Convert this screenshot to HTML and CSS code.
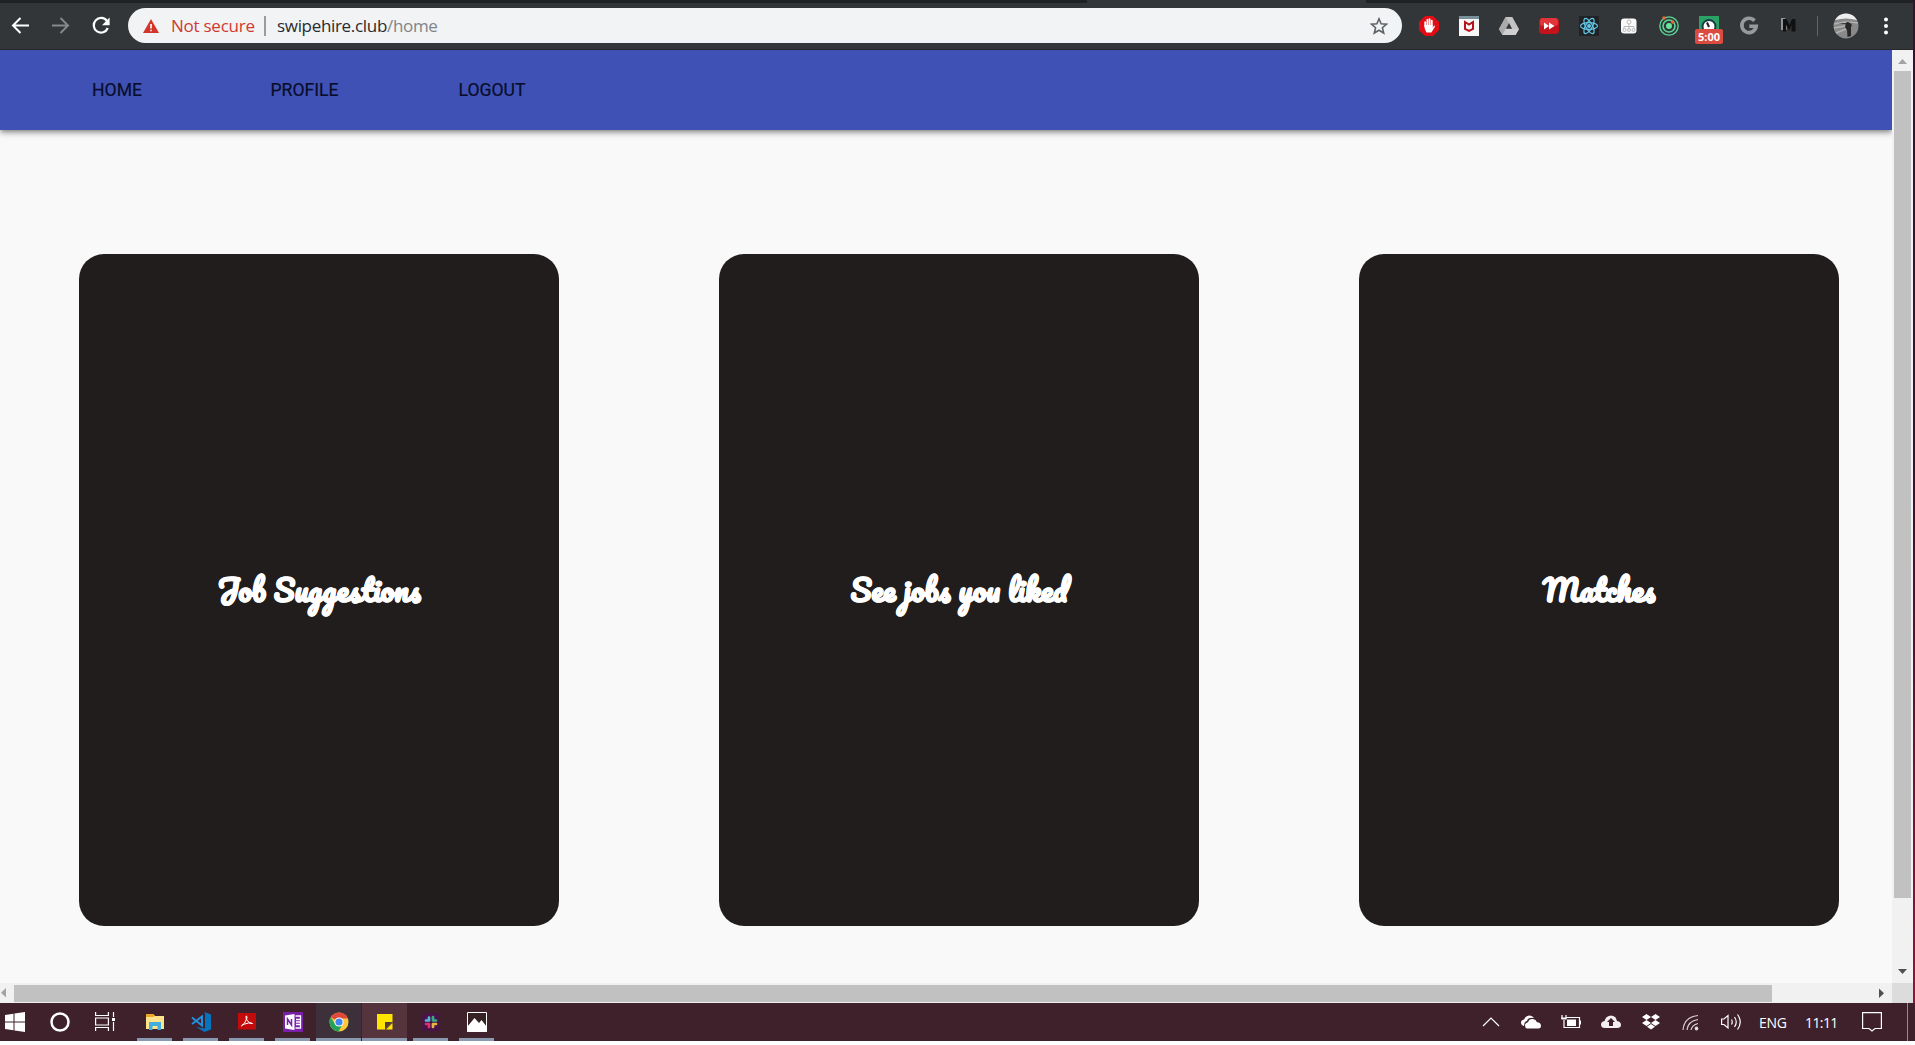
FILE: index.html
```html
<!DOCTYPE html>
<html lang="en">
<head>
<meta charset="utf-8">
<title>SwipeHire</title>
<link rel="stylesheet" href="styles.css">
</head>
<body>
<div class="browser">
  <div class="tabstrip"><i></i></div>
  <header class="toolbar">
    <svg class="nav-icons" width="128" height="47" viewBox="0 3 128 47" fill="none" stroke-width="2">
      <path d="M29 25.500H13M20.500 18L13 25.500L20.500 33" stroke="#fff"/>
      <path d="M52 25.500H68M60.500 18L68 25.500L60.500 33" stroke="#85878a"/>
      <path d="M107 21A7.300 7.300 0 1 0 107.800 28" stroke="#fff" stroke-width="2.200"/><path d="M109.600 17.500V25.200H102z" fill="#fff"/>
    </svg>
    <div class="address">
      <svg class="warn" width="16" height="14" viewBox="0 0 16 14"><path d="M8 0L16 14H0z" fill="#d2362b"/><path d="M8 5V9.500M8 10.700V12.300" stroke="#fff" stroke-width="1.600"/></svg>
      <span class="insecure">Not secure</span><i class="bar"></i><span class="url">swipehire.club<span class="path">/home</span></span>
      <svg class="star" width="18" height="18" viewBox="0 0 18 18"><path d="M9 1.800L11.100 6.700L16.500 7.200L12.400 10.700L13.700 16L9 13.200L4.300 16L5.600 10.700L1.500 7.200L6.900 6.700z" fill="none" stroke="#5f6368" stroke-width="1.600"/></svg>
    </div>
    <div class="extensions">
      <svg viewBox="0 0 20 20"><path d="M6 0H14L20 6V14L14 20H6L0 14V6z" fill="#e30c13"/><path d="M6.200 10V6.200M8.400 9V3.700M10.600 9V3.200M12.800 9.500V4.700" stroke="#fff" stroke-width="1.800" stroke-linecap="round"/><path d="M5.300 9H13.700V11.500L15.200 9.600Q16.500 9.700 15.700 11L12.400 16.500H7.500Q5.300 14 5.300 9z" fill="#fff"/></svg>
      <svg viewBox="0 0 20 20"><path d="M0 0H20V20H0z" fill="#f7f7f7"/><path d="M0 0H20V3H0z" fill="#78909c"/><path d="M6 6L10 8.500L14 6V13L10 15L6 13z" fill="none" stroke="#b5121b" stroke-width="2"/></svg>
      <svg viewBox="0 0 20 20"><path d="M6.700 1H13.300L20 13L16.500 19H3.500L0 13z" fill="#c4c4c4"/><path d="M6.700 1L0 13L3.500 19L10 7z" fill="#aaa"/><path d="M6.700 13H20L16.500 19H3.500z" fill="#d0d0d0"/><path d="M10 7L6.900 12.800H13.100z" fill="#333538"/></svg>
      <svg viewBox="0 0 20 20"><rect y="2" width="20" height="16" rx="4" fill="#c3131c"/><rect x="1" y="2" width="18" height="8" rx="3" fill="#e1353b"/><path d="M5 6.500L10 10L5 13.500zM10 6.500L15.500 10L10 13.500z" fill="#fff"/></svg>
      <svg viewBox="0 0 20 20"><path d="M0 0H20V20H0z" fill="#202225"/><g fill="none" stroke="#61c8e8" stroke-width="1.200"><ellipse cx="10" cy="10" rx="8.500" ry="3.300"/><ellipse cx="10" cy="10" rx="8.500" ry="3.300" transform="rotate(60 10 10)"/><ellipse cx="10" cy="10" rx="8.500" ry="3.300" transform="rotate(120 10 10)"/></g><circle cx="10" cy="10" r="2" fill="#61c8e8"/></svg>
      <svg viewBox="0 0 20 20"><rect x="2" y="2.500" width="15.500" height="15" rx="3" fill="#fafafa"/><g fill="none" stroke="#bbb"><circle cx="10" cy="6" r="2"/><path d="M10 8V13M5 13V10.500H15V13"/><circle cx="5.500" cy="14" r="1.500"/><circle cx="10" cy="14" r="1.500"/><circle cx="14.500" cy="14" r="1.500"/></g></svg>
      <svg viewBox="0 0 20 20"><g fill="none" stroke="#5bd996"><circle cx="10" cy="10" r="9.200" stroke-width="1.300"/><circle cx="10" cy="10" r="6" stroke-width="1.600"/></g><circle cx="10" cy="10" r="3" fill="#67e59a"/><circle cx="5" cy="2" r="1.700" fill="#ee6837"/><circle cx="13.700" cy="6" r="1.700" fill="#ee6837"/></svg>
      <div class="timer"><svg viewBox="0 0 20 20"><path d="M0 0H20V20H0z" fill="#29a263"/><circle cx="10" cy="10.500" r="6.500" fill="#fff" stroke="#173c46" stroke-width="2"/><path d="M10 11L8 6.500" stroke="#222" stroke-width="2"/></svg><b>5:00</b></div>
      <svg viewBox="0 0 20 20"><path d="M15.500 4.700A7.200 7.200 0 1 0 17.200 10.300H10.300" fill="none" stroke="#98999b" stroke-width="3.600"/></svg>
      <svg viewBox="0 0 20 20"><path d="M2 2H6L8 5V14H2z" fill="#929495"/><path d="M4 3H7.500L10.500 9L13 3H16.500V15.500H12.500V9L10.200 14.500L7.200 9V15.500H4z" fill="#111"/></svg>
    </div>
    <i class="separator"></i>
    <svg class="avatar" width="26" height="26" viewBox="0 0 26 26"><circle cx="13" cy="13" r="12.500" fill="#898989"/><path d="M2 7A12.500 12.500 0 0 1 24 7Q13 4 2 7z" fill="#eee"/><path d="M1 11L12 9L25 10M1 15L12 13M3 20L13 16" stroke="#b3b3b3" stroke-width="1.500"/><path d="M13 10Q14 8 17 10L19 12L18 14V23L14.500 24L14 17L12 14z" fill="#292929"/></svg>
    <svg class="menu" width="6" height="18" viewBox="0 0 6 18" fill="#fff"><circle cx="3" cy="2.500" r="2"/><circle cx="3" cy="9" r="2"/><circle cx="3" cy="15.500" r="2"/></svg>
  </header>
  <div class="viewport">
    <div class="page">
      <nav class="navbar"><a class="home">HOME</a><a class="profile">PROFILE</a><a>LOGOUT</a></nav>
      <main class="cards">
        <section class="card"><h2>Job Suggestions</h2></section>
        <section class="card"><h2>See jobs you liked</h2></section>
        <section class="card"><h2>Matches</h2></section>
      </main>
    </div>
    <div class="vscroll"><svg width="21" height="21"><path d="M6 14L10.500 9L15 14z" fill="#a3a3a3"/></svg><i></i><svg width="21" height="21"><path d="M6 7L10.500 12L15 7z" fill="#505050"/></svg></div>
    <div class="hscroll"><svg width="14" height="20"><path d="M6 5V14.500L1 9.700z" fill="#a3a3a3"/></svg><i></i><svg class="right" width="21" height="20"><path d="M8 5.500V15L13 10.200z" fill="#505050"/></svg></div>
    <div class="corner"></div>
  </div>
</div>
<footer class="taskbar">
  <div class="system">
    <svg viewBox="0 0 20 20" fill="#fff"><path d="M0 3L8.500 1.700V9.500H0zM9.500 1.500L20 0V9.500H9.500zM0 10.500H8.500V18.300L0 17zM9.500 10.500H20V20L9.500 18.500z"/></svg>
    <svg viewBox="0 0 20 20"><circle cx="10" cy="10" r="8.500" fill="none" stroke="#fff" stroke-width="2.500"/></svg>
    <svg viewBox="0 0 20 20" fill="none" stroke="#fff" stroke-width="1.200"><path d="M.6 0V3.500H13.400V0M.6 19V15.500H13.400V19M.6 6H13.400V13H.6zM18.500 0V5M18.500 10V19"/><path d="M17 6H20V9H17z" fill="#fff" stroke="none"/></svg>
  </div>
  <div class="apps">
    <div><svg viewBox="0 0 20 20"><path d="M1 2H8L10 4H19V17H1z" fill="#ffe38c"/><path d="M1 2H8L10 4L8 5H1z" fill="#eda827"/><path d="M4 18V10H16V18H12.500V14H7.500V18z" fill="#41aede"/></svg></div>
    <div><svg viewBox="0 0 20 20"><path d="M13.500 0L20 2.500V17.500L13.500 20L5 15L14 16.500V3z" fill="#0873bd"/><path d="M1 5.500L11 13.500V4.500L1 12" fill="none" stroke="#2390df" stroke-width="2"/></svg></div>
    <div><svg viewBox="0 0 20 20"><path d="M1 1H19V17.500H1z" fill="#c40b0b"/><path d="M4.500 14Q8 12 10 6Q10 3.500 9 4Q8.500 10 15.500 11.500Q12 10 6 12.500Q3.500 14.500 4.500 14z" fill="none" stroke="#fff" stroke-width="1"/></svg></div>
    <div><svg viewBox="0 0 20 20"><path d="M0 0H20V20H0z" fill="#7920a8"/><path d="M2 3.500L11.500 2V18L2 16.500z" fill="#fff"/><path d="M12.500 4H17.500V16H12.500M13 7.500H18M13 10H18M13 12.500H18" fill="none" stroke="#fff" stroke-width="1.300"/><path d="M4.500 13V7L8.500 13V7" fill="none" stroke="#7920a8" stroke-width="1.500"/></svg></div>
    <div class="chrome"><svg viewBox="0 0 20 20"><circle cx="10" cy="10" r="9.500" fill="#fdc83a"/><path d="M10 10L1.800 5.200A9.500 9.500 0 0 1 18.900 6.500H10z" fill="#df493c"/><path d="M1.800 5.200A9.500 9.500 0 0 0 9.500 19.500L13.200 13L6 12z" fill="#24a15b"/><circle cx="10" cy="10" r="4.600" fill="#fff"/><circle cx="10" cy="10" r="3.600" fill="#4285f4"/></svg></div>
    <div class="notes"><svg viewBox="0 0 20 20"><path d="M2 2H17.500V10L10 17.500H2z" fill="#ffe400"/><path d="M10 17.500V10H17.500z" fill="#513b37"/><path d="M17.500 11V17.500H11z" fill="#ffe400"/></svg></div>
    <div><svg viewBox="0 0 20 20"><rect x="1" y="1" width="18" height="18" rx="4" fill="#491348"/><g fill="none" stroke-width="2.700" stroke-linecap="round"><path d="M8 5.500V8M5 8.500H8" stroke="#56b7d4"/><path d="M12 5V8.500M12 8.500H15" stroke="#3aa984"/><path d="M5 12H8M8 12V15" stroke="#d43667"/><path d="M12 12H15M12 12V15" stroke="#e3b346"/></g></svg></div>
    <div><svg viewBox="0 0 20 20"><path d="M.5.5H19.500V19.500H.5z" fill="#352024" stroke="#fff"/><path d="M0 15L7.500 6L12 11L14.500 8L20 15V20H0z" fill="#fff"/></svg></div>
  </div>
  <div class="tray">
    <svg viewBox="0 0 20 20"><path d="M2 14L10 6L18 14" fill="none" stroke="#fff" stroke-width="1.200"/></svg>
    <svg viewBox="0 0 20 20" fill="#fff"><path d="M3 14Q0 13 0 10.500Q0 8 3 7.500Q6 1.500 11.500 4.500L13 6Q7 5 6 9Q3 9.500 3 14z"/><path d="M6 16.500Q4 16 4 13.500Q4 11 7 10.300Q8 6.500 12 7Q15 7.500 16 10.200Q20 10.500 20 14Q20 16 18 16.500z"/></svg>
    <svg viewBox="0 0 20 20" fill="none" stroke="#fff" stroke-width="1.200"><path d="M5 5.500H18.500V15.500H3V8M1 3V7H5V3M0 6H6"/><path d="M6 7.500H15V14H6z" fill="#fff" stroke="none"/><path d="M19.500 8.500V12.500"/></svg>
    <svg viewBox="0 0 20 20"><path d="M4 16Q0 16 0 12.500Q0 9.500 3.500 9Q5 3.500 10 3.500Q15 3.500 16 9Q20 9.500 20 13Q20 16 16 16z" fill="#f5edf0"/><path d="M10 6L14 10H12V14H8V10H6z" fill="#3d222b"/></svg>
    <svg viewBox="0 0 20 20" fill="#fff"><path d="M5.500 2L10 5L5.500 8L1 5zM14.500 2L19 5L14.500 8L10 5zM5.500 8L10 11L5.500 14L1 11zM14.500 8L19 11L14.500 14L10 11zM10 12L14 14.800L10 17.500L6 14.800z"/></svg>
    <svg viewBox="0 0 20 20" fill="none" stroke="#ddd2d6" stroke-width="1.200"><path d="M2 18Q3 5 17 3.500M6 18Q7 9 17 7.500M10 18Q11 13 17 11.500"/><circle cx="15.500" cy="16.500" r="1.300" fill="#fff"/></svg>
    <svg viewBox="0 0 20 20" fill="none" stroke="#fff" stroke-width="1.200"><path d="M.6 7H3L7 3.500V16L3 12.500H.6zM10.500 7.500Q12 10 10.500 12.500M13.500 5Q17 10 13.500 15M16.500 2.500Q22 10 16.500 17.500"/></svg>
    <span class="lang">ENG</span><span class="clock">11:11</span>
    <svg class="message" viewBox="0 0 20 20"><path d="M.6.600H19.400V16.500H13L10 19L7 16.500H.6z" fill="none" stroke="#fff" stroke-width="1.200"/></svg>
    <i></i>
  </div>
</footer>
</body>
</html>
```
FILE: styles.css
```css
* { box-sizing: border-box; }
body { margin: 0; width: 1915px; height: 1045px; overflow: hidden; background: #fff; font-family: "Open Sans", sans-serif; }
svg { display: block; flex: none; }
.browser { height: 1003px; border-right: 2px solid; border-image: linear-gradient(#35102f 0%, #35102f 45%, #91133e 100%) 1; }
.tabstrip { height: 3px; background: #202124; padding-left: 1087px; }
.tabstrip i { display: block; width: 279px; height: 3px; background: #323639; }
.toolbar { height: 47px; display: flex; align-items: center; background: #323639; border-bottom: 1px solid #25272b; }
.address { width: 1274px; height: 35px; margin-bottom: 1px; padding: 0 14px 0 15px; display: flex; align-items: center; border-radius: 18px; background: #f1f3f4; font-size: 17px; white-space: nowrap; }
.insecure { width: 84px; margin-left: 12px; color: #d13a31; letter-spacing: -.25px; }
.bar { width: 2px; height: 20px; margin: 0 11px 0 9px; background: #999c9f; }
.url { color: #292b2e; letter-spacing: -.32px; }
.path { color: #808488; }
.star { margin-left: auto; }
.extensions { display: flex; gap: 20px; margin: 0 0 1px 17px; }
.extensions svg { width: 20px; height: 20px; }
.timer { position: relative; width: 20px; height: 20px; }
.timer b { position: absolute; left: -4px; top: 13px; width: 28px; height: 15px; border-radius: 2px; background: #dc4b40; color: #fff; font: 700 11px/16px "Open Sans", sans-serif; text-align: center; }
.separator { width: 1px; height: 20px; margin: 0 15px 0 18px; background: #606368; }
.avatar { margin-right: 24px; }
.viewport { height: 953px; display: grid; grid-template-columns: 1892px 21px; grid-template-rows: 933px 20px; }
.page { background: #f9f9f9; overflow: hidden; }
.navbar { height: 80px; display: flex; align-items: center; padding: 0 0 1px 92px; background: #3f51b5; box-shadow: 0 2px 4px -1px rgba(0,0,0,.3), 0 4px 5px rgba(0,0,0,.16), 0 1px 10px rgba(0,0,0,.14); color: #090d2a; font: 400 17.6px Roboto, sans-serif; -webkit-text-stroke: .2px #090d2a; }
.home { width: 178.5px; }
.profile { width: 188px; }
.cards { display: grid; grid-template-columns: repeat(3, 480px); gap: 160px; padding: 124px 53px 0 79px; }
.card { height: 672px; border-radius: 25px; display: flex; justify-content: center; align-items: center; background: #201d1c; }
.card h2 { margin: 0; padding-bottom: 2px; color: #fff; font: 700 30px Pacifico, cursive; white-space: nowrap; -webkit-text-stroke: .6px #fff; }
.vscroll { background: #f1f1f1; display: flex; flex-direction: column; }
.vscroll i { height: 827px; margin: 0 2px; background: #c1c1c1; }
.vscroll svg:last-child { margin-top: auto; }
.hscroll { display: flex; background: #f1f1f1; }
.hscroll i { width: 1758px; height: 17px; margin-top: 2px; background: #c1c1c1; }
.hscroll .right { margin-left: auto; }
.corner { background: #dcdcdc; }
.taskbar { height: 38px; display: flex; background: #3e212b; }
.system { display: flex; gap: 25px; padding: 9px 0 0 5px; }
.system svg, .apps svg, .tray svg { width: 20px; height: 20px; }
.apps { display: flex; margin-left: 17px; gap: 1px; }
.apps > div { width: 45px; height: 38px; display: flex; justify-content: center; padding-top: 9px; background: linear-gradient(#8999b0, #8999b0) center bottom / 35px 3px no-repeat; }
.apps .chrome { background: linear-gradient(#8999b0, #8999b0) bottom / 100% 3px no-repeat #3d303a; }
.apps .notes { background: linear-gradient(#8999b0, #8999b0) bottom / 100% 3px no-repeat #56343e; }
.tray { margin-left: auto; display: flex; align-items: center; gap: 20px; color: #fff; font-size: 14px; }
.lang { width: 29px; margin-left: -2px; letter-spacing: -.3px; }
.clock { width: 34px; margin-left: -3px; letter-spacing: -.6px; }
.message { margin-left: 3px; }
.tray i { width: 1px; height: 38px; margin: 0 7px 0 5px; background: #9b858e; }
```
